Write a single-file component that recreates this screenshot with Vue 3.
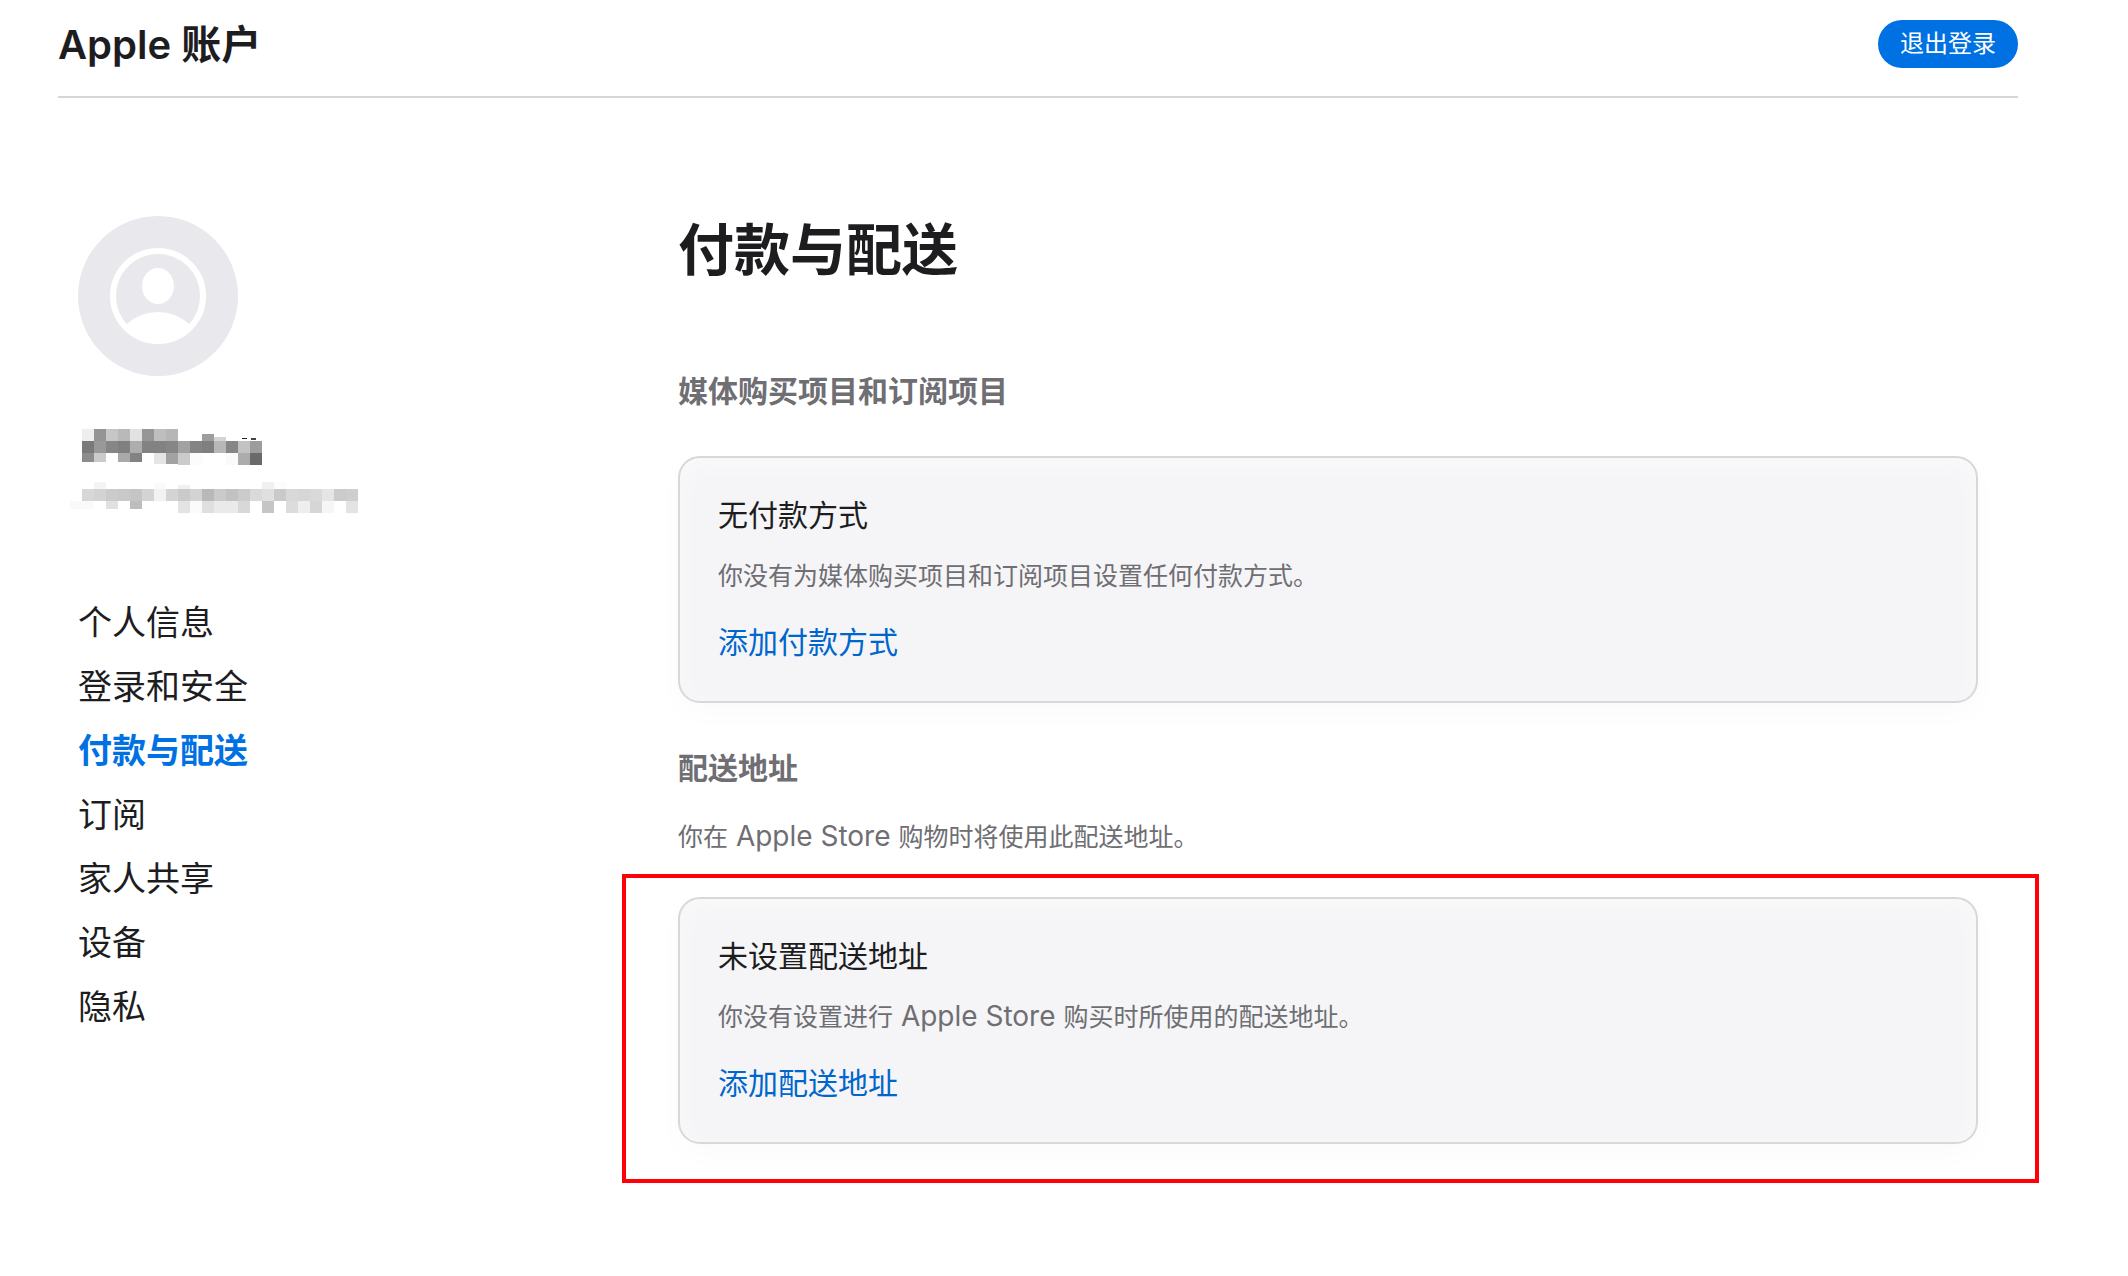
<script setup>
const menu = [
  { label: '个人信息' },
  { label: '登录和安全' },
  { label: '付款与配送', current: true },
  { label: '订阅' },
  { label: '家人共享' },
  { label: '设备' },
  { label: '隐私' },
]

// Greys of the redaction mosaic, one two-digit hex value per 12px cell; '--' is empty.
const toCells = (rows) =>
  rows.flatMap(({ y, h, tones }) =>
    tones
      .split(' ')
      .map((tone, i) => ({ x: i * 12, y, h, fill: `#${tone}${tone}${tone}`, empty: tone === '--' }))
      .filter((cell) => !cell.empty),
  )

const nameCells = toCells([
  { y: 1, h: 12, tones: '-- ee 94 c6 b9 e2 96 be b6' },
  { y: 6, h: 7, tones: '-- -- -- -- -- -- -- -- -- -- -- 9e' },
  { y: 9, h: 4, tones: '-- -- -- -- -- -- -- -- -- -- -- -- d4' },
  { y: 13, h: 12, tones: '-- 7a 99 86 80 ad 82 82 86 a2 84 7f b7 86 c2 9d' },
  { y: 25, h: 9, tones: '-- 8c cb -- a9 82' },
  { y: 25, h: 11, tones: '-- -- -- -- -- -- -- e5 a2' },
  { y: 25, h: 12, tones: '-- -- -- -- -- -- -- -- -- cb fc -- -- fa ac 6a' },
])

const mailCells = toCells([
  { y: 0, h: 7, tones: '-- -- f4 -- -- -- -- -- -- -- -- -- -- -- -- -- f0 fc' },
  { y: 1, h: 6, tones: '-- -- -- -- -- -- -- fa' },
  { y: 3, h: 4, tones: '-- -- -- -- -- -- -- -- -- f0' },
  { y: 7, h: 12, tones: '-- d7 d3 cb c9 c5 d4 f2 d4 ca d3 b9 ca c2 cb da e0 ca d8 d6 d9 e5 cb ce' },
  { y: 19, h: 8, tones: 'f9 fa -- e1 -- bd' },
  { y: 19, h: 12, tones: '-- -- -- -- -- -- -- -- -- e3 fb df ea ea d8 -- c5 -- dc ee d6 f6 -- e3' },
])
</script>

<template>
  <div class="page">
    <header class="top-bar">
      <span class="brand">Apple 账户</span>
      <button class="sign-out" type="button">退出登录</button>
    </header>

    <div class="body">
      <aside class="sidebar">
        <svg class="avatar" viewBox="0 0 160 160" aria-hidden="true">
          <circle cx="80" cy="80" r="80" fill="#e8e8ed" />
          <circle cx="80" cy="80" r="45" fill="none" stroke="#fff" stroke-width="6" />
          <ellipse cx="80" cy="70" rx="16" ry="18" fill="#fff" />
          <path d="M49 108A46 46 0 0 1 111 108L114 113A47 47 0 0 1 46 113Z" fill="#fff" />
        </svg>

        <svg class="mosaic name" viewBox="0 0 288 37" aria-hidden="true" shape-rendering="crispEdges">
          <rect v-for="(c, i) in nameCells" :key="i" :x="c.x" :y="c.y" width="12" :height="c.h" :fill="c.fill" />
          <rect x="172" y="10" width="5" height="1" fill="#222" />
          <rect x="181" y="10" width="5" height="2" fill="#444" />
        </svg>
        <svg class="mosaic mail" viewBox="0 0 288 31" aria-hidden="true" shape-rendering="crispEdges">
          <rect v-for="(c, i) in mailCells" :key="i" :x="c.x" :y="c.y" width="12" :height="c.h" :fill="c.fill" />
        </svg>

        <nav class="menu">
          <a
            v-for="item in menu"
            :key="item.label"
            href="#"
            :class="{ current: item.current }"
            :aria-current="item.current ? 'page' : undefined"
            >{{ item.label }}</a
          >
        </nav>
      </aside>

      <main class="content">
        <h1>付款与配送</h1>

        <section class="payment">
          <h2>媒体购买项目和订阅项目</h2>
          <div class="card">
            <h3>无付款方式</h3>
            <p>你没有为媒体购买项目和订阅项目设置任何付款方式。</p>
            <a href="#">添加付款方式</a>
          </div>
        </section>

        <section class="shipping">
          <h2>配送地址</h2>
          <p class="note">你在<span class="latin"> Apple Store </span>购物时将使用此配送地址。</p>
          <div class="marked">
            <div class="card">
              <h3>未设置配送地址</h3>
              <p>你没有设置进行<span class="latin"> Apple Store </span>购买时所使用的配送地址。</p>
              <a href="#">添加配送地址</a>
            </div>
            <div class="marker" aria-hidden="true"></div>
          </div>
        </section>
      </main>
    </div>
  </div>
</template>

<style>
body {
  background: #fff;
}
</style>

<style scoped>
.page {
  box-sizing: border-box;
  min-height: 100vh;
  color: #1d1d1f;
  font-family: Inter, 'Noto Sans CJK SC', sans-serif;
}

.top-bar {
  display: flex;
  align-items: center;
  justify-content: space-between;
  box-sizing: border-box;
  height: 98px;
  margin: 0 110px 0 58px;
  padding-bottom: 8px;
  border-bottom: 2px solid #d6d6d6;
}

.brand {
  padding-top: 2px;
  font-size: 40px;
  font-weight: 600;
  line-height: 48px;
}

.sign-out {
  width: 140px;
  height: 48px;
  padding: 0;
  border: 0;
  border-radius: 24px;
  background: #0071e3;
  color: #fff;
  font-family: inherit;
  font-size: 24px;
  line-height: 48px;
}

.body {
  display: flex;
  padding: 118px 150px 80px 78px;
}

.sidebar {
  display: flex;
  flex: 0 0 600px;
  flex-direction: column;
}

.avatar {
  width: 160px;
  height: 160px;
}

.mosaic {
  width: 288px;
  margin-left: -8px;
}

.name {
  height: 37px;
  margin-top: 52px;
}

.mail {
  height: 31px;
  margin-top: 17px;
}

.menu {
  display: flex;
  flex-direction: column;
  align-items: flex-start;
  margin-top: 78px;
}

.menu a {
  color: #1d1d1f;
  font-size: 34px;
  line-height: 64px;
  text-decoration: none;
}

.menu .current {
  color: #0071e3;
  font-weight: 600;
}

.content {
  flex: 1;
  min-width: 0;
}

h1,
h2,
h3,
p {
  margin: 0;
}

h1 {
  font-size: 56px;
  font-weight: 600;
  line-height: 68px;
}

h2 {
  color: #6e6e73;
  font-size: 30px;
  font-weight: 600;
  line-height: 46px;
}

.payment {
  margin-top: 84px;
}

.payment .card {
  margin-top: 42px;
}

.shipping {
  margin-top: 42px;
}

.note {
  margin-top: 28px;
}

p {
  color: #6e6e73;
  font-size: 25px;
  line-height: 36px;
}

.latin {
  font-size: 28px;
  line-height: 28px;
}

.marked {
  position: relative;
  margin-top: 42px;
}

.marker {
  position: absolute;
  inset: -23px -61px -39px -56px;
  border: 4px solid #ff000a;
  pointer-events: none;
}

.card {
  display: flex;
  flex-direction: column;
  align-items: flex-start;
  box-sizing: border-box;
  padding: 35px 38px 37px;
  border: 2px solid #d8d8d9;
  border-radius: 22px;
  background: #f5f5f7;
  box-shadow:
    0 10px 30px rgba(0, 0, 0, 0.02),
    inset 0 8px 24px rgba(255, 255, 255, 0.5);
}

.card h3,
.card a {
  font-size: 30px;
  font-weight: 400;
  line-height: 44px;
}

.card p {
  margin: 21px 0 26px;
}

.card a {
  color: #0066cc;
  text-decoration: none;
}
</style>
